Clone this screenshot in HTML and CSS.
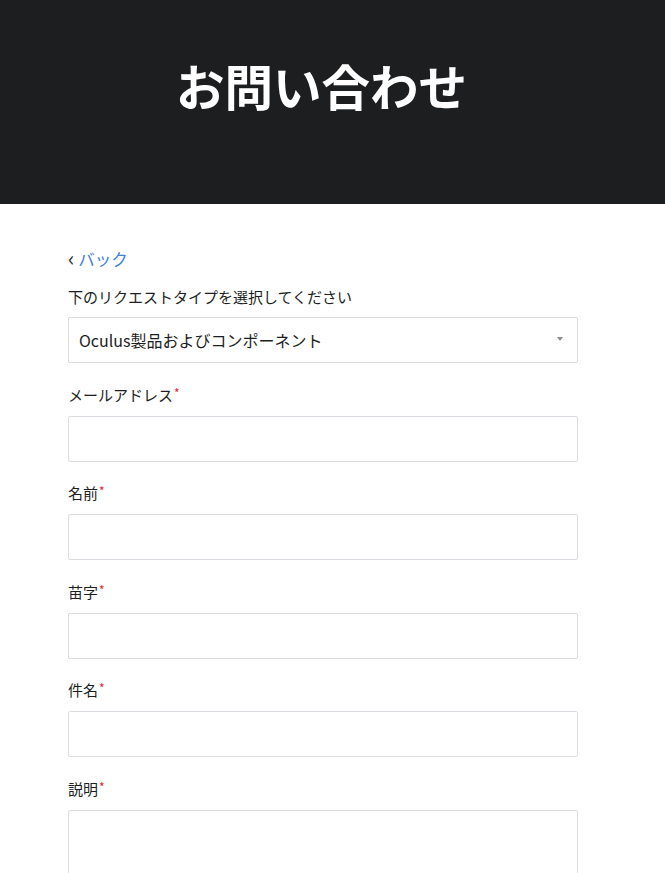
FILE: index.html
```html
<!DOCTYPE html>
<html lang="ja">
<head>
    <meta charset="UTF-8">
    <meta name="viewport" content="width=device-width, initial-scale=1.0">
    <title>お問い合わせ</title>
    <link rel="stylesheet" href="styles.css">
</head>
<body>
    <header class="hero">
        <h1>お問い合わせ</h1>
    </header>
    <main class="form-wrap">
        <a class="back" href="#"><span class="chev">‹</span>バック</a>
        <div class="field">
            <label class="label">下のリクエストタイプを選択してください</label>
            <div class="select">
                <span>Oculus製品およびコンポーネント</span>
                <span class="arrow"></span>
            </div>
        </div>
        <div class="field">
            <label class="label">メールアドレス<span class="req">*</span></label>
            <input class="box" type="email">
        </div>
        <div class="field">
            <label class="label">名前<span class="req">*</span></label>
            <input class="box" type="text">
        </div>
        <div class="field">
            <label class="label">苗字<span class="req">*</span></label>
            <input class="box" type="text">
        </div>
        <div class="field">
            <label class="label">件名<span class="req">*</span></label>
            <input class="box" type="text">
        </div>
        <div class="field">
            <label class="label">説明<span class="req">*</span></label>
            <textarea class="box area"></textarea>
        </div>
    </main>
</body>
</html>
```

FILE: styles.css
```css
* {
    box-sizing: border-box;
}

body {
    margin: 0;
    background: #fff;
    color: #1c1e21;
    font-family: "Noto Sans CJK JP", "Noto Sans", sans-serif;
}

.hero {
    height: 204px;
    background-color: #1d1e20;
    display: flex;
    align-items: center;
    justify-content: center;
    padding-right: 22px;
}

.hero h1 {
    margin: 0 0 34px 0;
    color: #fff;
    font-size: 48.5px;
    font-weight: 700;
}

.form-wrap {
    padding: 43px 0 0 68px;
    width: 578px;
}

.back {
    display: block;
    height: 23px;
    line-height: 23px;
    font-size: 16.5px;
    color: #4080d8;
    text-decoration: none;
}

.chev {
    color: #1c1e21;
    margin-right: 4px;
    font-size: 21px;
    line-height: 20px;
}

.field {
    margin-top: 16px;
}

.field + .field {
    margin-top: 20.5px;
}

.label {
    display: block;
    height: 22px;
    line-height: 22px;
    font-size: 15px;
    margin-bottom: 10px;
}

.field:first-of-type .label {
    margin-bottom: 9px;
}

.req {
    color: #e4232b;
    font-size: 12px;
    vertical-align: top;
    margin-left: 1px;
    line-height: 18px;
}

.select,
.box {
    display: block;
    width: 510px;
    height: 46px;
    border: 1px solid #dadde1;
    border-radius: 2px;
    background: #fff;
    font-family: inherit;
    font-size: 16px;
}

.select {
    display: flex;
    align-items: center;
    justify-content: space-between;
    padding: 0 14px 0 10px;
    color: #1c1e21;
}

.arrow {
    width: 0;
    height: 0;
    border-left: 3px solid transparent;
    border-right: 3px solid transparent;
    border-top: 4px solid #8a8d91;
    margin-bottom: 2px;
}

.area {
    height: 120px;
    resize: none;
}
```
